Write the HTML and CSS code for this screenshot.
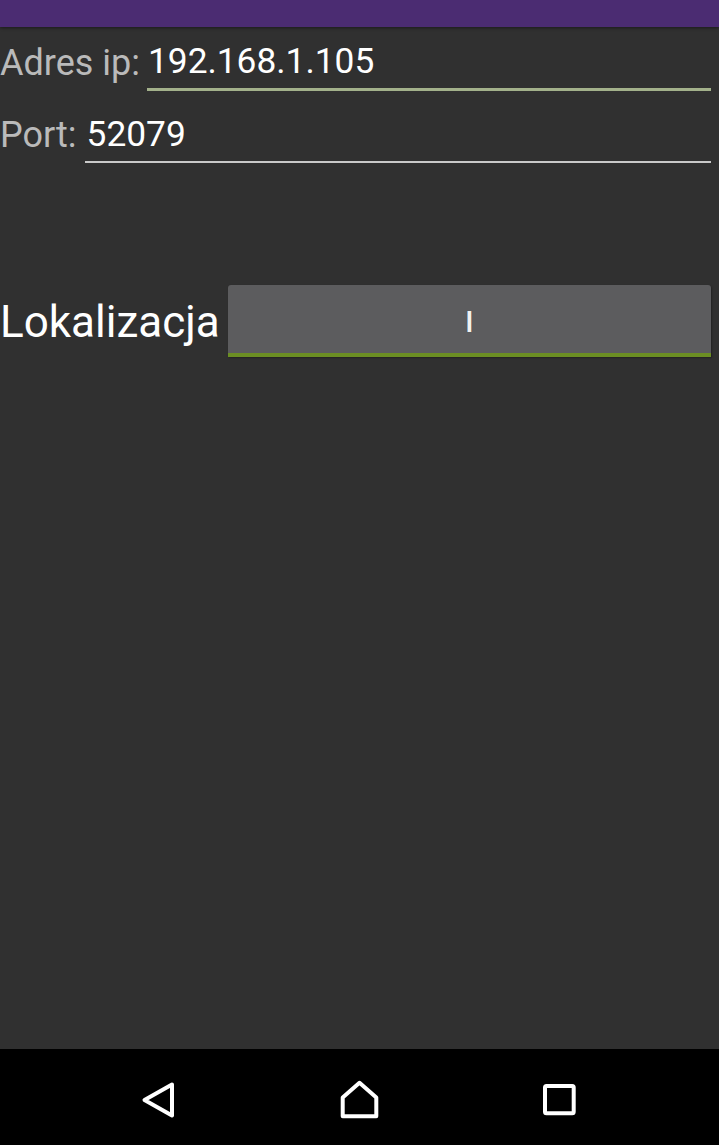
FILE: index.html
```html
<!DOCTYPE html>
<html lang="pl">
<head>
<meta charset="utf-8">
<title>Ustawienia</title>
<link rel="stylesheet" href="styles.css">
</head>
<body>
<div class="screen">
  <div class="appbar"></div>
  <main class="content">
    <div class="row row-ip">
      <span class="label label-ip">Adres ip:</span>
      <div class="field field-focused"><span class="value value-ip">192.168.1.105</span></div>
    </div>
    <div class="row row-port">
      <span class="label label-port">Port:</span>
      <div class="field field-plain"><span class="value value-port">52079</span></div>
    </div>
    <div class="row row-loc">
      <span class="loc-label">Lokalizacja</span>
      <button class="loc-button" type="button">I</button>
    </div>
  </main>
  <nav class="navbar">
    <svg class="nav-icons" width="719" height="96" viewBox="0 0 719 96" fill="none" stroke="#ffffff" stroke-width="4" stroke-linejoin="round" stroke-linecap="round">
      <path d="M172 35.5 L144.5 51 L172 66.5 Z"/>
      <path d="M342.7 67.3 V48.5 L359.5 33.8 L376.3 48.5 V67.3 Z"/>
      <rect x="545" y="37" width="28.7" height="27.3" rx="1.5"/>
    </svg>
  </nav>
</div>
</body>
</html>
```

FILE: styles.css
```css
* {
  box-sizing: border-box;
}

html, body {
  margin: 0;
  padding: 0;
  background: #303030;
}

body {
  font-family: Roboto, "Noto Sans", "Liberation Sans", sans-serif;
}

.screen {
  width: 719px;
  height: 1145px;
  display: flex;
  flex-direction: column;
  overflow: hidden;
}

.appbar {
  height: 27px;
  flex: 0 0 27px;
  background: #4b2c72;
  box-shadow: 0 1px 3px rgba(0, 0, 0, 0.45);
  position: relative;
  z-index: 1;
}

.content {
  flex: 1 1 auto;
  background: #303030;
  display: flex;
  flex-direction: column;
}

.row {
  display: flex;
  align-items: flex-start;
}

.row-ip {
  margin-top: 14px;
}

.row-port {
  margin-top: 23px;
}

.row-loc {
  margin-top: 122px;
}

.label {
  font-size: 36px;
  line-height: 41px;
  color: #bababa;
  white-space: nowrap;
}

.label-ip {
  margin-top: 2px;
}

.label-port {
  margin-top: 1px;
}

.field {
  flex: 1 1 auto;
  margin-right: 8px;
  padding-bottom: 6px;
}

.field-focused {
  margin-left: 7px;
  border-bottom: 3px solid #a3b18b;
}

.field-plain {
  margin-left: 8px;
  border-bottom: 2px solid #c9c9c9;
}

.value {
  display: block;
  font-size: 35.3px;
  line-height: 41px;
  color: #ffffff;
}

.value-ip {
  padding-left: 1px;
}

.value-port {
  padding-left: 2px;
}

.loc-label {
  font-size: 44px;
  line-height: 50px;
  color: #ffffff;
  margin-top: 12px;
  white-space: nowrap;
}

.loc-button {
  flex: 1 1 auto;
  margin-left: 8px;
  margin-right: 8px;
  height: 72px;
  border: none;
  border-bottom: 4px solid #6b8e23;
  border-radius: 3px 3px 0 0;
  background: #5c5c5e;
  box-shadow: 1px 1px 2px rgba(0, 0, 0, 0.3);
  color: #f2f2f2;
  font-family: Roboto, "Noto Sans", "Liberation Sans", sans-serif;
  font-size: 29px;
  font-weight: 500;
  line-height: 1;
  padding: 6px 0 0 0;
  display: flex;
  align-items: center;
  justify-content: center;
}

.navbar {
  flex: 0 0 96px;
  height: 96px;
  background: #000000;
}

.nav-icons {
  display: block;
}
```
